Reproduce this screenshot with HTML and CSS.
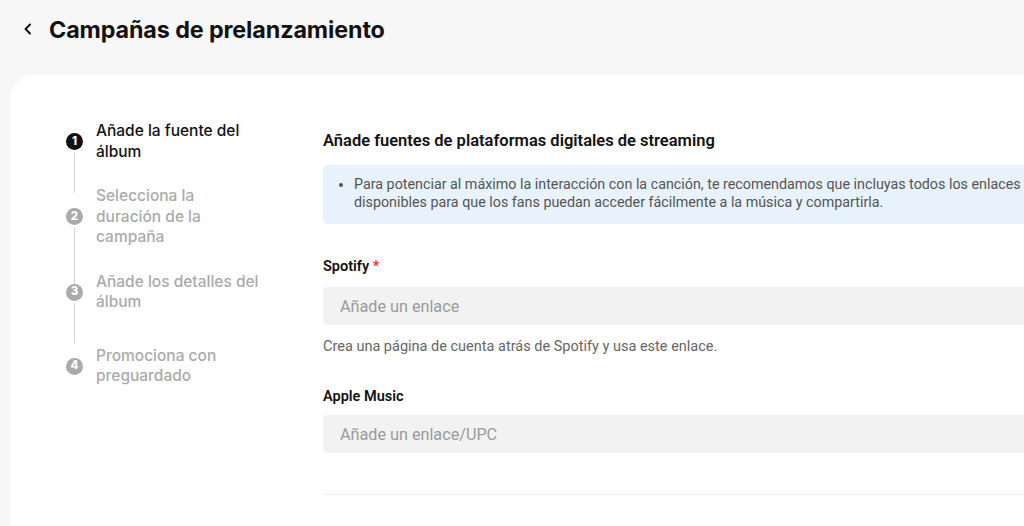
FILE: index.html
```html
<!DOCTYPE html>
<html lang="es">
<head>
    <meta charset="UTF-8">
    <meta name="viewport" content="width=device-width, initial-scale=1.0">
    <title>Campañas de prelanzamiento</title>
    <link rel="stylesheet" href="styles.css">
</head>
<body>
    <header class="page-header">
        <button class="back-btn" aria-label="Volver">
            <svg width="12" height="12" viewBox="0 0 12 12">
                <path d="M8 1.5L3.5 6L8 10.5" fill="none" stroke="#111" stroke-width="2" stroke-linecap="round" stroke-linejoin="round"/>
            </svg>
        </button>
        <h1>Campañas de prelanzamiento</h1>
    </header>

    <main class="card">
        <ol class="steps">
            <li class="step active">
                <span class="step-num">1</span>
                <span class="step-label">Añade la fuente del álbum</span>
            </li>
            <li class="step">
                <span class="step-num">2</span>
                <span class="step-label">Selecciona la duración de la campaña</span>
            </li>
            <li class="step step-tall">
                <span class="step-num">3</span>
                <span class="step-label">Añade los detalles del álbum</span>
            </li>
            <li class="step">
                <span class="step-num">4</span>
                <span class="step-label">Promociona con preguardado</span>
            </li>
        </ol>

        <section class="form">
            <h2>Añade fuentes de plataformas digitales de streaming</h2>
            <div class="notice">
                <ul>
                    <li>Para potenciar al máximo la interacción con la canción, te recomendamos que incluyas todos los enlaces disponibles para que los fans puedan acceder fácilmente a la música y compartirla.</li>
                </ul>
            </div>

            <div class="field">
                <label for="spotify">Spotify <span class="required">*</span></label>
                <input id="spotify" type="text" placeholder="Añade un enlace">
                <p class="hint">Crea una página de cuenta atrás de Spotify y usa este enlace.</p>
            </div>

            <div class="field field-last">
                <label for="apple">Apple Music</label>
                <input id="apple" type="text" placeholder="Añade un enlace/UPC">
            </div>

            <hr class="divider">
        </section>
    </main>
</body>
</html>
```

FILE: styles.css
```css
body {
    margin: 0;
    background-color: #f7f7f7;
    font-family: Roboto, "Liberation Sans", Arial, sans-serif;
    color: #111;
    overflow: hidden;
}
.page-header {
    display: flex;
    align-items: center;
    height: 58px;
    padding-left: 20px;
}
.back-btn {
    display: flex;
    align-items: center;
    justify-content: center;
    width: 16px;
    height: 16px;
    padding: 0;
    margin-right: 13px;
    border: none;
    background: none;
    cursor: pointer;
}
.page-header h1 {
    margin: 0;
    font-family: Inter, Roboto, sans-serif;
    font-size: 23.3px;
    font-weight: 700;
    letter-spacing: -0.1px;
}
.card {
    display: flex;
    margin-left: 10px;
    margin-top: 17px;
    height: 451px;
    overflow: hidden;
    background-color: #fff;
    border-top-left-radius: 24px;
    padding-top: 46px;
    box-sizing: border-box;
}
.steps {
    list-style: none;
    margin: 0;
    padding: 0 0 0 56px;
    width: 200px;
    flex-shrink: 0;
}
.step {
    position: relative;
    display: flex;
    align-items: center;
    margin-bottom: 24px;
    font-family: Inter, Roboto, sans-serif;
    font-size: 15.5px;
    line-height: 20.5px;
    color: #aaa;
    font-weight: 500;
}
.step-tall {
    margin-bottom: 33px;
}
.step:not(:last-child)::after {
    content: "";
    position: absolute;
    left: 7.5px;
    top: calc(50% + 11px);
    height: calc(100% - 1px);
    border-left: 1.5px solid #d4d4d4;
}
.step-num {
    display: flex;
    align-items: center;
    justify-content: center;
    width: 17px;
    height: 17px;
    margin-right: 13px;
    flex-shrink: 0;
    border-radius: 50%;
    background-color: #aaa;
    color: #fff;
    font-size: 11.5px;
    font-weight: 800;
    line-height: 1;
}
.step-label {
    width: 165px;
}
.step.active {
    color: #111;
}
.step.active .step-num {
    background-color: #111;
}
.form {
    flex: 1;
    min-width: 0;
    padding-left: 57px;
}
.form h2 {
    margin: 10px 0 14px;
    font-size: 16.5px;
    font-weight: 600;
    line-height: 20px;
}
.notice {
    background-color: #e7f2fc;
    border-radius: 6px 0 0 6px;
    padding: 10px 0 13px 18px;
    margin-bottom: 34px;
    margin-right: -40px;
}
.notice ul {
    margin: 0;
    padding-left: 13px;
    font-size: 14.3px;
    line-height: 18px;
    color: #555;
}
.field {
    margin-bottom: 32px;
}
.field label {
    display: block;
    margin-bottom: 11px;
    font-size: 14.5px;
    font-weight: 600;
    line-height: 18px;
}
.field-last {
    margin-bottom: 41px;
}
.field-last label {
    margin-bottom: 9px;
}
.required {
    color: #e53935;
}
.field input {
    display: block;
    box-sizing: border-box;
    width: 100%;
    height: 38px;
    padding: 0 17px;
    border: none;
    border-radius: 4px 0 0 4px;
    background-color: #f2f2f2;
    font-family: inherit;
    font-size: 16.2px;
    color: #111;
}
.field input::placeholder {
    color: #9a9a9a;
}
.hint {
    margin: 13px 0 0;
    font-size: 14.5px;
    line-height: 18px;
    color: #666;
}
.divider {
    margin: 0;
    border: none;
    border-top: 1px solid #eee;
}
```
